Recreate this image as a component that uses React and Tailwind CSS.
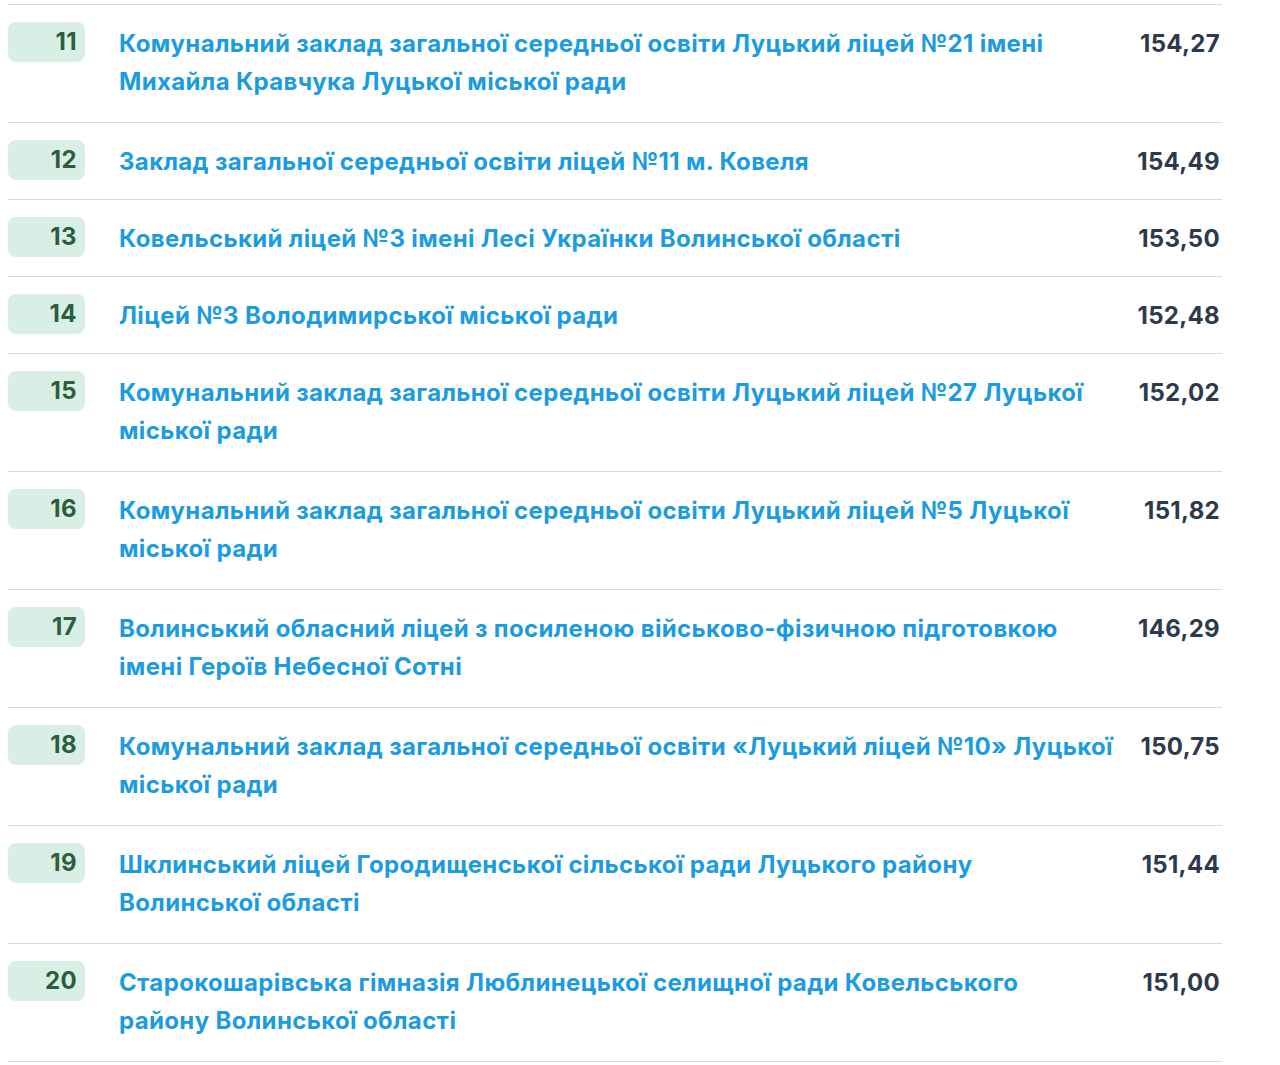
import React from 'react';

const rows = [
  { rank: 11, lines: ['Комунальний заклад загальної середньої освіти Луцький ліцей №21 імені', 'Михайла Кравчука Луцької міської ради'], score: '154,27' },
  { rank: 12, lines: ['Заклад загальної середньої освіти ліцей №11 м. Ковеля'], score: '154,49' },
  { rank: 13, lines: ['Ковельський ліцей №3 імені Лесі Українки Волинської області'], score: '153,50' },
  { rank: 14, lines: ['Ліцей №3 Володимирської міської ради'], score: '152,48' },
  { rank: 15, lines: ['Комунальний заклад загальної середньої освіти Луцький ліцей №27 Луцької', 'міської ради'], score: '152,02' },
  { rank: 16, lines: ['Комунальний заклад загальної середньої освіти Луцький ліцей №5 Луцької', 'міської ради'], score: '151,82' },
  { rank: 17, lines: ['Волинський обласний ліцей з посиленою військово-фізичною підготовкою', 'імені Героїв Небесної Сотні'], score: '146,29' },
  { rank: 18, lines: ['Комунальний заклад загальної середньої освіти «Луцький ліцей №10» Луцької', 'міської ради'], score: '150,75' },
  { rank: 19, lines: ['Шклинський ліцей Городищенської сільської ради Луцького району', 'Волинської області'], score: '151,44' },
  { rank: 20, lines: ['Старокошарівська гімназія Люблинецької селищної ради Ковельського', 'району Волинської області'], score: '151,00' }
];

const App = () => {
  return (
    <div
      className="min-h-screen w-full bg-white pt-[4px]"
      style={{ fontFamily: 'Inter, "Noto Sans", sans-serif' }}
    >
      <div className="ml-[8px] w-[1214px] border-b border-[#d9d9d9]">
        {rows.map((row) => (
          <div
            key={row.rank}
            className={
              row.lines.length > 1
                ? 'flex items-start border-t border-[#d9d9d9] pt-[17px] pb-[21px]'
                : 'flex items-start border-t border-[#d9d9d9] pt-[17px] pb-[18px]'
            }
          >
            <div className="flex h-[40px] w-[77px] shrink-0 items-center justify-end rounded-[8px] bg-[#d9efe5] pr-[8px] text-[24px] font-bold tracking-[0.4px] text-[#2b5e3d]">
              {row.rank}
            </div>
            <a
              href="#"
              className="mt-[3px] ml-[34px] flex min-w-0 flex-1 flex-col text-[24px] font-bold leading-[38px] tracking-[0.35px] text-[#1b9be1]"
            >
              {row.lines.map((line) => (
                <span key={line} className="whitespace-nowrap">
                  {line}
                </span>
              ))}
            </a>
            <div className="mt-[3px] ml-[20px] shrink-0 pr-[2px] text-[24px] font-bold leading-[38px] tracking-[0.3px] text-[#2c3a4b]">
              {row.score}
            </div>
          </div>
        ))}
      </div>
    </div>
  );
};

export default App;
